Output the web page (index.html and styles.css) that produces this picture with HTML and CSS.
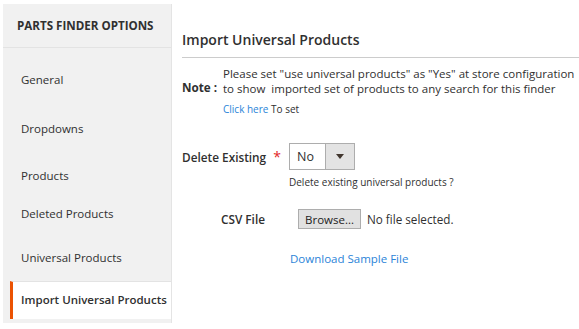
FILE: index.html
```html
<!DOCTYPE html>
<html lang="en">
<head>
    <meta charset="UTF-8">
    <title>Import Universal Products</title>
    <link rel="stylesheet" href="styles.css">
</head>
<body>

    <div class="page">
        <div class="sidebar">
            <div class="sidebar-title">PARTS FINDER OPTIONS</div>
            <ul class="tabs">
                <li class="tab tab-general">General</li>
                <li class="tab tab-dropdowns">Dropdowns</li>
                <li class="tab tab-products">Products</li>
                <li class="tab tab-deleted">Deleted Products</li>
                <li class="tab tab-universal">Universal Products</li>
                <li class="tab tab-active">Import Universal Products</li>
            </ul>
        </div>

        <div class="content">
            <h2 class="section-title">Import Universal Products</h2>

            <div class="note">
                <div class="note-label">Note :</div>
                <div class="note-body">
                    <div class="note-text">Please set "use universal products" as "Yes" at store configuration<br>to show&nbsp; imported set of products to any search for this finder</div>
                    <div class="note-link"><a href="#">Click here</a> To set</div>
                </div>
            </div>

            <div class="field field-delete">
                <label class="field-label">Delete Existing</label>
                <span class="field-mark">*</span>
                <div class="field-control">
                    <div class="select">
                        <span class="select-value">No</span>
                        <span class="select-arrow"></span>
                    </div>
                    <div class="field-hint">Delete existing universal products ?</div>
                </div>
            </div>

            <div class="field field-file">
                <label class="field-label">CSV File</label>
                <span class="field-mark"></span>
                <div class="field-control file-control">
                    <button type="button" class="browse">Browse...</button>
                    <span class="file-name">No file selected.</span>
                </div>
            </div>

            <a href="#" class="download">Download Sample File</a>
        </div>
    </div>

</body>
</html>
```

FILE: styles.css
```css
body {
    font-family: 'Open Sans', 'Liberation Sans', sans-serif;
    color: #303030;
    background-color: #fff;
    margin: 0;
    padding: 0;
}

a {
    color: #2b84d8;
    text-decoration: none;
}

.page {
    display: flex;
    align-items: flex-start;
    padding: 4px 0 0 3px;
}

/* sidebar */

.sidebar {
    width: 169px;
    flex-shrink: 0;
    background-color: #f1f1f1;
    border-right: 1px solid #e4e4e4;
    box-sizing: border-box;
    padding-bottom: 4px;
}

.sidebar-title {
    height: 43px;
    line-height: 43px;
    padding-left: 14px;
    font-size: 11.6px;
    font-weight: 700;
    white-space: nowrap;
    border-bottom: 1px solid #e3e3e3;
}

.tabs {
    list-style: none;
    margin: 0;
    padding: 0;
}

.tab {
    font-size: 11.5px;
    line-height: 18px;
    padding-left: 18px;
    white-space: nowrap;
}

.tab-general { margin-top: 23px; }
.tab-dropdowns { margin-top: 31px; }
.tab-products { margin-top: 29px; }
.tab-deleted { margin-top: 20px; }
.tab-universal { margin-top: 26px; }

.tab.tab-active {
    margin: 14px 0 0 7px;
    padding: 9px 0 10px 8px;
    background-color: #fff;
    border-left: 3px solid #eb5202;
    border-top: 1px solid #e3e3e3;
    font-weight: 600;
    color: #303030;
}

/* content */

.content {
    flex: 1;
    margin-left: 10px;
}

.section-title {
    margin: 26px 0 0;
    padding-bottom: 7px;
    font-size: 14px;
    line-height: 20px;
    font-weight: 600;
    border-bottom: 1px solid #cccccc;
}

.note {
    display: flex;
    margin-top: 8px;
    font-size: 11.5px;
}

.note-label {
    width: 41px;
    flex-shrink: 0;
    padding-top: 14px;
    line-height: 15px;
    font-weight: 700;
    font-size: 11.7px;
}

.note-text {
    line-height: 15px;
    white-space: nowrap;
}

.note-link {
    margin-top: 6px;
    font-size: 10px;
    line-height: 14px;
}

.field {
    display: flex;
    align-items: flex-start;
}

.field-label {
    width: 83px;
    flex-shrink: 0;
    text-align: right;
    font-size: 11.8px;
    font-weight: 600;
    line-height: 20px;
    white-space: nowrap;
}

.field-mark {
    width: 24px;
    flex-shrink: 0;
    text-align: center;
    color: #e22626;
    font-size: 14px;
    line-height: 20px;
    padding-top: 4px;
}

.field-delete {
    margin-top: 27px;
}

.field-delete .field-label {
    padding-top: 4px;
}

.select {
    display: flex;
    width: 66px;
    height: 27px;
    border: 1px solid #adadad;
    box-sizing: border-box;
    font-size: 12.5px;
}

.select-value {
    flex: 1;
    line-height: 25px;
    padding-left: 7px;
}

.select-arrow {
    width: 28px;
    background-color: #e3e3e3;
    border-left: 1px solid #adadad;
    display: flex;
    justify-content: center;
    align-items: center;
}

.select-arrow::before {
    content: "";
    border-left: 4px solid transparent;
    border-right: 4px solid transparent;
    border-top: 5px solid #41362f;
}

.field-hint {
    margin-top: 5px;
    font-size: 10px;
    line-height: 14px;
}

.field-file {
    margin-top: 20px;
    align-items: center;
}

.file-control {
    display: flex;
    align-items: center;
    padding-left: 9px;
}

.browse {
    height: 20px;
    padding: 0 6px;
    font-family: inherit;
    font-size: 11.5px;
    color: #222;
    background-color: #e1e1e1;
    border: 1px solid #adadad;
    border-radius: 0;
}

.file-name {
    margin-left: 6px;
    font-size: 11.7px;
}

.download {
    display: block;
    margin: 23px 0 0 108px;
    font-size: 11.5px;
    line-height: 14px;
}
```
